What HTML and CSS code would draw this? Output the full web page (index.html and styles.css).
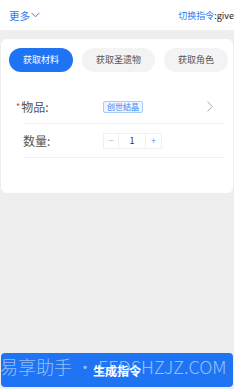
FILE: index.html
```html
<!DOCTYPE html>
<html lang="zh-CN">
<head>
<meta charset="utf-8">
<title>指令</title>
<link rel="stylesheet" href="styles.css">
</head>
<body>
<div class="page">
  <header class="topbar">
    <div class="more">更多<svg class="more-caret" width="9" height="6" viewBox="0 0 9 6"><polyline points="0.5,0.8 4.5,4.8 8.5,0.8" fill="none" stroke="#2f7bf5" stroke-width="1"/></svg></div>
    <div class="switch"><span class="switch-link">切换指令</span>:give</div>
  </header>
  <main class="main">
    <section class="card">
      <div class="tabs">
        <button class="tab tab-active">获取材料</button>
        <button class="tab">获取圣遗物</button>
        <button class="tab">获取角色</button>
      </div>
      <div class="form">
        <div class="row">
          <div class="label"><span class="req">*</span>物品:</div>
          <div class="value">
            <span class="tag">创世结晶</span>
            <svg class="arrow" width="6" height="11" viewBox="0 0 6 11"><polyline points="0.6,0.6 5.2,5.5 0.6,10.4" fill="none" stroke="#a8a8a8" stroke-width="1"/></svg>
          </div>
        </div>
        <div class="row">
          <div class="label">数量:</div>
          <div class="value">
            <div class="stepper">
              <span class="step step-minus">−</span>
              <span class="step-num">1</span>
              <span class="step step-plus">+</span>
            </div>
          </div>
        </div>
      </div>
    </section>
    <div class="submit">
      <span class="submit-text">生成指令</span>
      <span class="watermark">易享助手 • EEDSHZJZ.COM</span>
    </div>
  </main>
</div>
</body>
</html>
```
FILE: styles.css
```css
* { box-sizing: border-box; }
html, body { margin: 0; padding: 0; }
body {
  font-family: "Noto Sans CJK SC", "Noto Sans", sans-serif;
  background: #eeeeee;
  color: #333;
  width: 234px;
  height: 389px;
  overflow: hidden;
}
.page {
  height: 389px;
  display: flex;
  flex-direction: column;
}
.topbar {
  height: 30px;
  background: #fff;
  display: flex;
  align-items: center;
  justify-content: space-between;
  padding-left: 9px;
  flex-shrink: 0;
}
.more {
  font-size: 10.5px;
  color: #2f7bf5;
  display: flex;
  align-items: center;
  gap: 1px;
}
.switch {
  font-size: 9px;
  color: #222;
  white-space: nowrap;
}
.switch-link { color: #2f7bf5; }
.main {
  flex: 1;
  display: flex;
  flex-direction: column;
  padding-top: 9px;
}
.card {
  margin: 0 1px;
  height: 154px;
  background: #fff;
  border-radius: 6px;
  padding-top: 9px;
}
.tabs {
  display: flex;
  gap: 9px;
  padding-left: 8px;
}
.tab {
  border: none;
  height: 24px;
  padding: 0 14px;
  border-radius: 12px;
  background: #f3f3f3;
  color: #555;
  font-family: inherit;
  font-size: 9px;
  line-height: 24px;
}
.tab-active {
  background: #1f74f4;
  color: #fff;
}
.form {
  margin: 18px 8px 0 22px;
}
.row {
  height: 34px;
  display: flex;
  align-items: center;
  border-bottom: 1px solid #efefef;
}
.label {
  width: 80px;
  font-size: 12px;
  color: #555;
  flex-shrink: 0;
}
.req {
  color: #e54545;
  font-size: 9px;
  margin-left: -7px;
  margin-right: 1px;
  vertical-align: 2px;
}
.value {
  flex: 1;
  display: flex;
  align-items: center;
}
.tag {
  height: 12px;
  line-height: 10px;
  padding: 0 3px;
  font-size: 8px;
  color: #3d84f0;
  background: #eef5ff;
  border: 1px solid #a9cbfa;
  border-radius: 2px;
}
.arrow {
  margin-left: auto;
  margin-right: 12px;
}
.stepper {
  display: flex;
  height: 16px;
  border: 1px solid #f0f0f0;
}
.step {
  width: 15px;
  display: flex;
  align-items: center;
  justify-content: center;
  font-size: 9px;
}
.step-minus { color: #b5b5b5; border-right: 1px solid #f0f0f0; }
.step-plus { color: #4d8ff3; border-left: 1px solid #f0f0f0; width: 16px; }
.step-num {
  width: 26px;
  display: flex;
  align-items: center;
  justify-content: center;
  font-size: 9px;
  color: #333;
}
.submit {
  position: relative;
  margin: auto 1px 2px;
  height: 34px;
  background: #1f74f4;
  border-radius: 4px;
  display: flex;
  align-items: center;
  justify-content: center;
}
.submit-text {
  color: #fff;
  font-size: 12px;
  font-weight: bold;
  position: relative;
  z-index: 1;
}
.watermark {
  position: absolute;
  left: -1px;
  top: 2px;
  font-size: 18px;
  line-height: 22px;
  font-weight: 300;
  white-space: nowrap;
  color: rgba(255, 255, 255, 0.55);
  z-index: 2;
}
```
